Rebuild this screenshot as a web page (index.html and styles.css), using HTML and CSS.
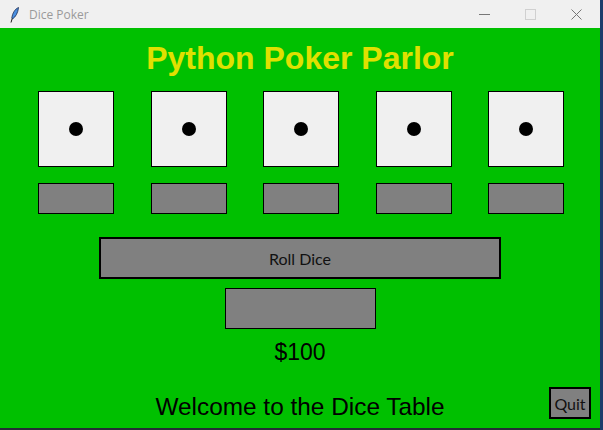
FILE: index.html
```html
<!DOCTYPE html>
<html>
<head>
<meta charset="utf-8">
<title>Dice Poker</title>
<link rel="stylesheet" href="styles.css">
</head>
<body>
<div class="window">
  <div class="titlebar">
    <svg class="app-icon" width="10" height="16" viewBox="0 0 10 16">
      <path d="M8.5 0.5 C5 2 2.5 6 1.8 11 L2.5 12 C5.5 10 8 6 8.5 0.5 Z" fill="#4a8fe0" stroke="#1a2a50" stroke-width="0.8"/>
      <path d="M2.2 11.5 L1 15.5" stroke="#1a1a1a" stroke-width="1"/>
    </svg>
    <span class="title-text">Dice Poker</span>
    <div class="controls">
      <span class="ctl ctl-min"></span>
      <span class="ctl ctl-max"></span>
      <svg class="ctl ctl-close" width="11" height="11" viewBox="0 0 11 11">
        <path d="M0.5 0.5 L10.5 10.5 M10.5 0.5 L0.5 10.5" stroke="#777" stroke-width="1"/>
      </svg>
    </div>
  </div>
  <div class="table">
    <h1 class="heading">Python Poker Parlor</h1>
    <div class="dice-row">
      <div class="die"><span class="pip"></span></div>
      <div class="die"><span class="pip"></span></div>
      <div class="die"><span class="pip"></span></div>
      <div class="die"><span class="pip"></span></div>
      <div class="die"><span class="pip"></span></div>
    </div>
    <div class="hold-row">
      <div class="hold"></div>
      <div class="hold"></div>
      <div class="hold"></div>
      <div class="hold"></div>
      <div class="hold"></div>
    </div>
    <div class="roll">Roll Dice</div>
    <div class="score-box"></div>
    <div class="money">$100</div>
    <div class="bottom-row">
      <div class="spacer"></div>
      <div class="welcome">Welcome to the Dice Table</div>
      <div class="quit-cell"><div class="quit">Quit</div></div>
    </div>
  </div>
</div>
</body>
</html>
```
FILE: styles.css
```css
html, body {
  margin: 0;
  padding: 0;
}
body {
  width: 603px;
  height: 430px;
  background: #1b3d6b;
  overflow: hidden;
}
.window {
  width: 600px;
  height: 428px;
  display: flex;
  flex-direction: column;
  box-shadow: 0 2px 0 #262b36;
}
.titlebar {
  height: 28px;
  background: #f0f0f0;
  display: flex;
  align-items: center;
  position: relative;
}
.app-icon {
  margin-left: 10px;
  margin-top: 1px;
}
.title-text {
  margin-left: 9px;
  font-family: "Open Sans", "Noto Sans", sans-serif;
  font-size: 12px;
  color: #9a9a9a;
}
.controls {
  margin-left: auto;
  display: flex;
  align-items: center;
}
.ctl {
  display: block;
}
.ctl-min {
  width: 11px;
  height: 1px;
  background: #777;
  margin-right: 35px;
}
.ctl-max {
  width: 9px;
  height: 9px;
  border: 1px solid #d0d0d0;
  margin-right: 35px;
}
.ctl-close {
  margin-right: 18px;
}
.table {
  flex: 1;
  background: #00c000;
  display: flex;
  flex-direction: column;
  align-items: center;
  font-family: "Liberation Sans", Arial, sans-serif;
}
.heading {
  margin: 12px 0 0;
  font-size: 32px;
  line-height: 36px;
  font-weight: bold;
  color: #e0e000;
}
.dice-row, .hold-row {
  width: 526px;
  margin-left: 2px;
  display: flex;
  justify-content: space-between;
}
.dice-row {
  margin-top: 15px;
}
.die {
  width: 74px;
  height: 74px;
  border: 1px solid #000;
  background: #f0f0f0;
  display: flex;
  align-items: center;
  justify-content: center;
}
.pip {
  width: 14px;
  height: 14px;
  border-radius: 50%;
  background: #000;
}
.hold-row {
  margin-top: 16px;
}
.hold {
  width: 74px;
  height: 29px;
  border: 1px solid #000;
  background: #808080;
}
.roll {
  margin-top: 23px;
  width: 398px;
  height: 38px;
  border: 2px solid #000;
  background: #808080;
  display: flex;
  align-items: center;
  justify-content: center;
  font-family: Lato, "Open Sans", sans-serif;
  font-size: 16px;
  color: #111;
}
.score-box {
  margin-top: 9px;
  width: 149px;
  height: 39px;
  border: 1px solid #000;
  background: #808080;
}
.money {
  margin-top: 9px;
  font-size: 23px;
  line-height: 28px;
  color: #000;
}
.bottom-row {
  margin-top: 21px;
  width: 100%;
  display: grid;
  grid-template-columns: 1fr auto 1fr;
  align-items: start;
}
.welcome {
  margin-top: 4px;
  font-size: 24.4px;
  line-height: 32px;
  color: #000;
}
.quit-cell {
  display: flex;
  justify-content: flex-end;
  padding-right: 9px;
}
.quit {
  width: 38px;
  height: 28px;
  border: 2px solid #000;
  background: #808080;
  display: flex;
  align-items: center;
  justify-content: center;
  font-family: Lato, "Open Sans", sans-serif;
  font-size: 16px;
  color: #111;
}
```
